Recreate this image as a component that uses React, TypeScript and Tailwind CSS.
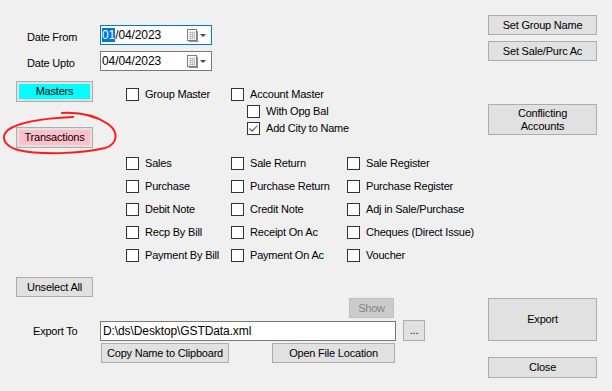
import React from "react";

const FONT = "font-['Liberation_Sans',Arial,sans-serif]";

function Btn({
  children,
  className = "",
  disabled,
}: {
  children: React.ReactNode;
  className?: string;
  disabled?: boolean;
}) {
  return (
    <div
      className={`flex items-center justify-center text-center border leading-[13px] ${
        disabled ? "bg-[#cccccc] border-[#bfbfbf] text-[#838383]" : "bg-[#e1e1e1] border-[#adadad] text-black"
      } ${className}`}
    >
      {children}
    </div>
  );
}

function ColorBtn({ label, fill }: { label: string; fill: string }) {
  return (
    <div className="w-[77px] h-[21px] border border-[#adadad] bg-[#e1e1e1] p-[2px]">
      <div className={`h-full flex items-center justify-center text-black ${fill}`}>{label}</div>
    </div>
  );
}

function Check({ label, checked }: { label: string; checked?: boolean }) {
  return (
    <div className="flex items-center h-[13px] gap-[6px] whitespace-nowrap">
      <span className="w-[13px] h-[13px] shrink-0 border border-[#333333] bg-white flex items-center justify-center">
        {checked && (
          <svg width="11" height="11" viewBox="0 0 11 11">
            <path d="M1.5 5.5 L4.2 8.2 L9.5 2.5" fill="none" stroke="#555555" strokeWidth="1.1" />
          </svg>
        )}
      </span>
      <span className="leading-none">{label}</span>
    </div>
  );
}

function DateBox({ value, focused }: { value: string; focused?: boolean }) {
  const [dd, rest] = [value.slice(0, 2), value.slice(2)];
  return (
    <div
      className={`w-[112px] h-[20px] bg-white border flex items-center pl-[1px] pr-[4px] ${
        focused ? "border-[#0078d7]" : "border-[#7a7a7a]"
      }`}
    >
      <span className="text-[12px] leading-[14px] tracking-[-0.1px]">
        <span className={focused ? "bg-[#0078d7] text-white" : ""}>{dd}</span>
        {rest}
      </span>
      <svg className="ml-auto" width="20" height="13" viewBox="0 0 20 13">
        <rect x="2" y="2" width="9" height="11" fill="#8f8f8f" />
        <rect x="0.5" y="0.5" width="9" height="11" fill="#fafafa" stroke="#7d7d7d" strokeWidth="1" />
        <path d="M2 3.5h6M2 5.5h6M2 7.5h6M2 9.5h6M3.5 2.5v8M5.5 2.5v8M7.5 2.5v8" stroke="#b9b9b9" strokeWidth="0.8" />
        <path d="M13 5 L19 5 L16 8 Z" fill="#3d4b6b" />
      </svg>
    </div>
  );
}

export default function App() {
  return (
    <div className={`w-[612px] h-[391px] bg-[#f0f0f0] relative overflow-hidden text-[11px] tracking-[-0.2px] text-black ${FONT}`}>
      <div className="flex">
        {/* left side */}
        <div className="w-[488px] flex flex-col pt-[25px]">
          <div className="flex items-start h-[20px]">
            <span className="pl-[27px] w-[100px] pt-[6px] leading-[13px]">Date From</span>
            <DateBox value="01/04/2023" focused />
          </div>
          <div className="flex items-start h-[20px] mt-[6px]">
            <span className="pl-[27px] w-[100px] pt-[6px] leading-[13px]">Date Upto</span>
            <DateBox value="04/04/2023" />
          </div>

          <div className="flex mt-[10px]">
            <div className="w-[126px] pl-[16px] flex flex-col">
              <ColorBtn label="Masters" fill="bg-[#00ffff]" />
              <div className="mt-[25px]">
                <ColorBtn label="Transactions" fill="bg-[#ffc0cb]" />
              </div>
            </div>
            <div className="flex pt-[7px]">
              <div className="w-[105px]">
                <Check label="Group Master" />
              </div>
              <div className="flex flex-col gap-[4px]">
                <Check label="Account Master" />
                <div className="pl-[16px] flex flex-col gap-[4px]">
                  <Check label="With Opg Bal" />
                  <Check label="Add City to Name" checked />
                </div>
              </div>
            </div>
          </div>

          <div className="grid grid-cols-[105px_116px_auto] gap-y-[10px] ml-[126px] mt-[9px]">
            <Check label="Sales" />
            <Check label="Sale Return" />
            <Check label="Sale Register" />
            <Check label="Purchase" />
            <Check label="Purchase Return" />
            <Check label="Purchase Register" />
            <Check label="Debit Note" />
            <Check label="Credit Note" />
            <Check label="Adj in Sale/Purchase" />
            <Check label="Recp By Bill" />
            <Check label="Receipt On Ac" />
            <Check label="Cheques (Direct Issue)" />
            <Check label="Payment By Bill" />
            <Check label="Payment On Ac" />
            <Check label="Voucher" />
          </div>

          <div className="mt-[15px] pl-[16px]">
            <Btn className="w-[77px] h-[20px]">Unselect All</Btn>
          </div>
          <div className="mt-[1px] pl-[349px]">
            <Btn className="w-[45px] h-[20px]" disabled>
              Show
            </Btn>
          </div>
          <div className="mt-[2px] flex items-start h-[21px]">
            <span className="pl-[33px] w-[100px] pt-[5px] leading-[13px]">Export To</span>
            <div className="mt-[1px] w-[296px] h-[20px] bg-white border border-[#7a7a7a] flex items-center px-[2px] text-[12px] tracking-[-0.1px]">
              D:\ds\Desktop\GSTData.xml
            </div>
            <Btn className="ml-[7px] w-[22px] h-[21px] text-[#4b0082]">...</Btn>
          </div>
          <div className="mt-[2px] flex pl-[101px]">
            <Btn className="w-[128px] h-[20px]">Copy Name to Clipboard</Btn>
            <Btn className="ml-[43px] w-[123px] h-[20px]">Open File Location</Btn>
          </div>
        </div>

        {/* right side */}
        <div className="w-[109px] flex flex-col pt-[15px]">
          <Btn className="h-[20px]">Set Group Name</Btn>
          <Btn className="h-[20px] mt-[6px]">Set Sale/Purc Ac</Btn>
          <Btn className="h-[31px] mt-[43px]">
            Conflicting
            <br />
            Accounts
          </Btn>
          <Btn className="h-[43px] mt-[163px]">Export</Btn>
          <Btn className="h-[21px] mt-[16px]">Close</Btn>
        </div>
      </div>

      {/* hand-drawn annotation over the Transactions button */}
      <svg className="absolute left-0 top-0 pointer-events-none" width="130" height="160" viewBox="0 0 130 160">
        <path
          d="M73 117 C50 118 20 121 8 130 C0 137 4 146 18 150 C40 155 80 154 105 148 C118 144 119 132 108 124 C96 116 80 112 62 113"
          fill="none"
          stroke="#ff1a1a"
          strokeWidth="2"
          strokeLinecap="round"
        />
      </svg>
    </div>
  );
}
